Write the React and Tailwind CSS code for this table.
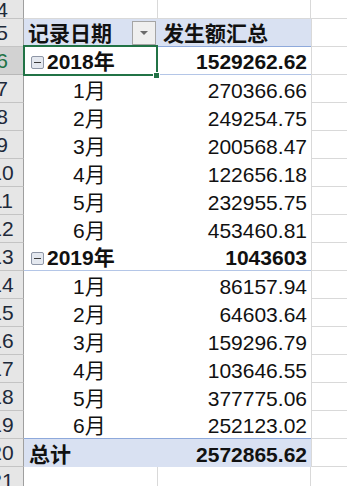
import React from 'react';

const months = [
  ['1月', '270366.66'],
  ['2月', '249254.75'],
  ['3月', '200568.47'],
  ['4月', '122656.18'],
  ['5月', '232955.75'],
  ['6月', '453460.81'],
];
const months2019 = [
  ['1月', '86157.94'],
  ['2月', '64603.64'],
  ['3月', '159296.79'],
  ['4月', '103646.55'],
  ['5月', '377775.06'],
  ['6月', '252123.02'],
];

const RowNum = ({ n, active, short }) => (
  <div
    className={`w-[24px] shrink-0 overflow-hidden border-r border-b border-r-[#9f9f9f] flex items-center ${
      active ? 'bg-[#d2d2d2] text-[#217346] border-b-[#b8b8b8]' : 'bg-[#e6e6e6] text-[#1e2a3a] border-b-[#c4c4c4]'
    } ${short ? 'h-[19px]' : 'h-[28px]'}`}
  >
    <div className="w-[40px] -ml-[18px] shrink-0 text-center leading-none">{n}</div>
  </div>
);

const Minus = () => (
  <span className="w-[13px] h-[13px] mr-[3px] rounded-[2px] border border-[#8e96a6] bg-[#e4e8ef] flex items-center justify-center shrink-0">
    <span className="block w-[7px] h-[1px] bg-[#3c3c3c]" />
  </span>
);

const EmptyC = ({ short }) => (
  <div className={`flex-1 border-b border-[#d9d9d9] ${short ? 'h-[19px]' : 'h-[28px]'}`} />
);

export default function App() {
  return (
    <div
      className="relative w-[347px] h-[486px] overflow-hidden bg-white text-[21px] text-[#111]"
      style={{ fontFamily: '"Liberation Sans", "Noto Sans CJK SC", sans-serif' }}
    >
      {/* row 4 */}
      <div className="flex">
        <RowNum n="4" short />
        <div className="w-[134px] h-[19px] border-r border-b border-[#d9d9d9]" />
        <div className="w-[153px] h-[19px] border-r border-b border-[#d9d9d9]" />
        <EmptyC short />
      </div>

      {/* row 5 header */}
      <div className="flex">
        <RowNum n="5" />
        <div className="w-[287px] h-[28px] bg-[#d9e1f2] border-b border-[#8ea9db] flex items-center">
          <div className="w-[134px] flex items-center pl-[4px] font-bold">
            <span className="flex-1 pt-[2px]">记录日期</span>
            <span className="w-[24px] h-[24px] mr-[2px] border border-[#a5a5a5] bg-[#efefef] flex items-center justify-center">
              <span className="block w-0 h-0 border-l-[4px] border-r-[4px] border-t-[4px] border-l-transparent border-r-transparent border-t-[#6b6b6b]" />
            </span>
          </div>
          <div className="flex-1 pl-[5px] font-bold pt-[2px]">发生额汇总</div>
        </div>
        <div className="w-0 h-[28px] border-r border-[#d9d9d9]" />
        <EmptyC />
      </div>

      {/* row 6: 2018 */}
      <div className="flex">
        <RowNum n="6" active />
        <div className="w-[287px] h-[28px] border-b border-[#b4c6e7] flex items-center font-bold">
          <div className="w-[134px] flex items-center pl-[7px] pt-[3px]">
            <Minus />
            <span>2018年</span>
          </div>
          <div className="flex-1 text-right pr-[4px] pt-[3px]">1529262.62</div>
        </div>
        <div className="w-0 h-[28px] border-r border-[#d9d9d9]" />
        <EmptyC />
      </div>

      {months.map(([m, v], i) => (
        <div className="flex" key={m}>
          <RowNum n={String(7 + i)} />
          <div className="w-[287px] h-[28px] flex items-center">
            <div className="w-[134px] pl-[49px] pt-[3px]">{m}</div>
            <div className="flex-1 text-right pr-[4px] pt-[3px]">{v}</div>
          </div>
          <div className="w-0 h-[28px] border-r border-[#d9d9d9]" />
          <EmptyC />
        </div>
      ))}

      {/* row 13: 2019 */}
      <div className="flex">
        <RowNum n="13" />
        <div className="w-[287px] h-[28px] border-b border-[#b4c6e7] flex items-center font-bold">
          <div className="w-[134px] flex items-center pl-[7px] pt-[3px]">
            <Minus />
            <span>2019年</span>
          </div>
          <div className="flex-1 text-right pr-[4px] pt-[3px]">1043603</div>
        </div>
        <div className="w-0 h-[28px] border-r border-[#d9d9d9]" />
        <EmptyC />
      </div>

      {months2019.map(([m, v], i) => (
        <div className="flex" key={'b' + m}>
          <RowNum n={String(14 + i)} />
          <div className={`w-[287px] h-[28px] flex items-center ${i === 5 ? 'border-b border-[#8ea9db]' : ''}`}>
            <div className="w-[134px] pl-[49px] pt-[3px]">{m}</div>
            <div className="flex-1 text-right pr-[4px] pt-[3px]">{v}</div>
          </div>
          <div className="w-0 h-[28px] border-r border-[#d9d9d9]" />
          <EmptyC />
        </div>
      ))}

      {/* row 20: total */}
      <div className="flex">
        <RowNum n="20" />
        <div className="w-[287px] h-[28px] bg-[#d9e1f2] flex items-center font-bold">
          <div className="w-[134px] pl-[5px] pt-[3px]">总计</div>
          <div className="flex-1 text-right pr-[4px] pt-[3px]">2572865.62</div>
        </div>
        <div className="w-0 h-[28px] border-r border-[#d9d9d9]" />
        <EmptyC />
      </div>

      {/* row 21 */}
      <div className="flex">
        <RowNum n="21" />
        <div className="w-[134px] h-[28px] border-r border-b border-[#d9d9d9]" />
        <div className="w-[153px] h-[28px] border-r border-b border-[#d9d9d9]" />
        <EmptyC />
      </div>

      {/* active cell selection */}
      <div className="absolute left-[23px] top-[45px] w-[135px] h-[31px] border-2 border-[#217346] pointer-events-none" />
      <div className="absolute left-[153px] top-[72px] w-[7px] h-[7px] bg-[#217346] border border-white" />
    </div>
  );
}
